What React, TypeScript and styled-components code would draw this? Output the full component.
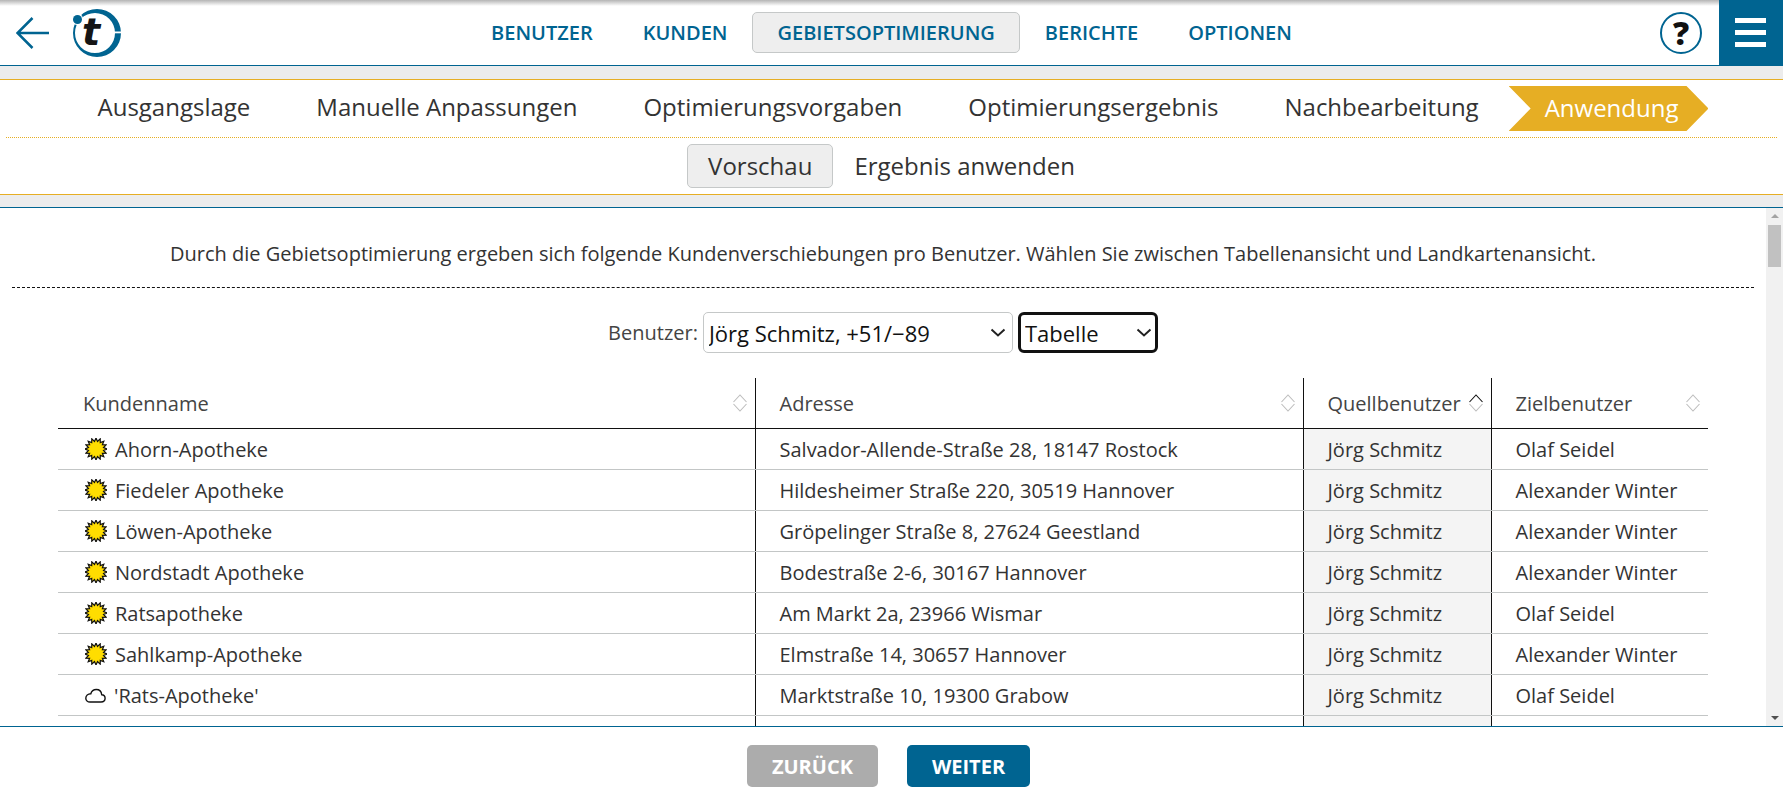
import React from 'react';
import styled, {createGlobalStyle} from 'styled-components';

const BLUE = '#006491';
const GOLD = '#e6ae24';

// chevron of the two selects, same shape as the browser's one in the reference
const CHEVRON = `url("data:image/svg+xml,%3Csvg xmlns='http://www.w3.org/2000/svg' width='16' height='9' viewBox='0 0 16 9'%3E%3Cpath d='M1.500 1.500L8 7.500L14.500 1.500' fill='none' stroke='%23222' stroke-width='2'/%3E%3C/svg%3E")`;

const GlobalStyle = createGlobalStyle`
  html, body {
    margin: 0;
    height: 100%;
    background: #fff;
    font-family: "Open Sans", "Liberation Sans", sans-serif;
    color: #333;
  }
  #root {
    height: 100%;
  }
  * {
    box-sizing: border-box;
  }
`

const STEPS = ['Ausgangslage', 'Manuelle Anpassungen', 'Optimierungsvorgaben', 'Optimierungsergebnis', 'Nachbearbeitung'];
const NAV = ['Benutzer', 'Kunden', 'Gebietsoptimierung', 'Berichte', 'Optionen'];

const ROWS = [
    {icon: 'sun', name: 'Ahorn-Apotheke', address: 'Salvador-Allende-Straße 28, 18147 Rostock', target: 'Olaf Seidel'},
    {icon: 'sun', name: 'Fiedeler Apotheke', address: 'Hildesheimer Straße 220, 30519 Hannover', target: 'Alexander Winter'},
    {icon: 'sun', name: 'Löwen-Apotheke', address: 'Gröpelinger Straße 8, 27624 Geestland', target: 'Alexander Winter'},
    {icon: 'sun', name: 'Nordstadt Apotheke', address: 'Bodestraße 2-6, 30167 Hannover', target: 'Alexander Winter'},
    {icon: 'sun', name: 'Ratsapotheke', address: 'Am Markt 2a, 23966 Wismar', target: 'Olaf Seidel'},
    {icon: 'sun', name: 'Sahlkamp-Apotheke', address: 'Elmstraße 14, 30657 Hannover', target: 'Alexander Winter'},
    {icon: 'cloud', name: "'Rats-Apotheke'", address: 'Marktstraße 10, 19300 Grabow', target: 'Olaf Seidel'},
];

const sunPoints = () => {
    const pts: string[] = [];
    for (let i = 0; i < 32; i++) {
        const r = i % 2 === 0 ? 11 : 7.7;
        const a = (Math.PI * 2 * i) / 32;
        pts.push(`${(11 + r * Math.sin(a)).toFixed(2)},${(11 - r * Math.cos(a)).toFixed(2)}`);
    }
    return pts.join(' ');
};

const SunIcon = () => (
    <StyledIcon width="22" height="22" viewBox="0 0 22 22">
        <polygon points={sunPoints()} fill="#ffdd00" stroke="#111" strokeWidth="1.2" strokeLinejoin="miter"/>
    </StyledIcon>
);

const CloudIcon = () => (
    <StyledIcon width="21" height="22" viewBox="0 0 21 22">
        <path d="M5 18h11c2.500 0 4.100-1.700 4.100-3.700 0-2-1.500-3.500-3.400-3.600C16.400 7.500 14.300 5.500 11.300 5.500c-2.700 0-4.800 1.700-5.500 4.200C3 9.800 .8 11.700.8 14.200.8 16.400 2.700 18 5 18z" fill="none" stroke="#111" strokeWidth="1.400"/>
    </StyledIcon>
);

const SortIcon = ({active}: {active?: boolean}) => (
    <svg width="14" height="18" viewBox="0 0 14 18">
        <path d="M.5 8L7 1L13.500 8" fill="none" stroke={active ? '#111' : '#bdbdbd'} strokeWidth="1.100"/>
        <path d="M.5 10L7 17L13.500 10" fill="none" stroke="#bdbdbd" strokeWidth="1.100"/>
    </svg>
);

const Logo = () => (
    <svg width="50" height="50" viewBox="0 0 50 50">
        <path fillRule="evenodd" fill={BLUE} d="M25 1a24 24 0 1 0 0 48a24 24 0 1 0 0-48zM23 5a20 20 0 1 1 0 40a20 20 0 1 1 0-40z"/>
        <rect x="41" y="23.500" width="9" height="1.800" fill="#fff"/>
        <circle cx="5" cy="11" r="6" fill="#fff"/>
        <circle cx="5.500" cy="11.500" r="4.500" fill={BLUE}/>
        <StyledLogoLetter x="10" y="37">t</StyledLogoLetter>
    </svg>
);

export default function App() {
    return (
        <StyledPage>
            <GlobalStyle/>
            <StyledHeader>
                <StyledHeaderLeft>
                    <svg width="34" height="32" viewBox="0 0 34 32">
                        <path d="M33 16H2M16.500 1L1.500 16l15 15" fill="none" stroke={BLUE} strokeWidth="2.500"/>
                    </svg>
                    <Logo/>
                </StyledHeaderLeft>
                <StyledNav>
                    {NAV.map(item => (
                        <StyledNavItem key={item} $active={item === 'Gebietsoptimierung'}>{item}</StyledNavItem>
                    ))}
                </StyledNav>
                <StyledHeaderRight>
                    <StyledHelp>?</StyledHelp>
                    <StyledMenuButton>
                        <span/><span/><span/>
                    </StyledMenuButton>
                </StyledHeaderRight>
            </StyledHeader>
            <StyledBand/>
            <StyledWizard>
                <StyledSteps>
                    {STEPS.map(step => <StyledStep key={step}>{step}</StyledStep>)}
                    <StyledStepActive>Anwendung</StyledStepActive>
                </StyledSteps>
                <StyledSubSteps>
                    <StyledSubStep $active>Vorschau</StyledSubStep>
                    <StyledSubStep>Ergebnis anwenden</StyledSubStep>
                </StyledSubSteps>
            </StyledWizard>
            <StyledBandBlue/>
            <StyledPane>
                <StyledContent>
                    <StyledIntro>
                        Durch die Gebietsoptimierung ergeben sich folgende Kundenverschiebungen pro Benutzer. Wählen Sie zwischen Tabellenansicht und Landkartenansicht.
                    </StyledIntro>
                    <StyledFilters>
                        <StyledLabel>Benutzer:</StyledLabel>
                        <StyledUserSelect defaultValue="joerg">
                            <option value="joerg">Jörg Schmitz, +51/−89</option>
                        </StyledUserSelect>
                        <StyledViewSelect defaultValue="table">
                            <option value="table">Tabelle</option>
                            <option value="map">Landkarte</option>
                        </StyledViewSelect>
                    </StyledFilters>
                    <StyledTable>
                        <colgroup>
                            <col width="697"/>
                            <col width="548"/>
                            <col width="188"/>
                            <col width="217"/>
                        </colgroup>
                        <thead>
                            <tr>
                                <StyledHeadCell><StyledHeadInner>Kundenname<SortIcon/></StyledHeadInner></StyledHeadCell>
                                <StyledHeadCell><StyledHeadInner>Adresse<SortIcon/></StyledHeadInner></StyledHeadCell>
                                <StyledHeadCell><StyledHeadInner>Quellbenutzer<SortIcon active/></StyledHeadInner></StyledHeadCell>
                                <StyledHeadCell><StyledHeadInner>Zielbenutzer<SortIcon/></StyledHeadInner></StyledHeadCell>
                            </tr>
                        </thead>
                        <tbody>
                            {ROWS.map(row => (
                                <tr key={row.name}>
                                    <StyledCell>
                                        <StyledName>
                                            {row.icon === 'sun' ? <SunIcon/> : <CloudIcon/>}
                                            {row.name}
                                        </StyledName>
                                    </StyledCell>
                                    <StyledCell>{row.address}</StyledCell>
                                    <StyledCell $shaded>Jörg Schmitz</StyledCell>
                                    <StyledCell>{row.target}</StyledCell>
                                </tr>
                            ))}
                            <tr>
                                <StyledCell/>
                                <StyledCell/>
                                <StyledCell $shaded/>
                                <StyledCell/>
                            </tr>
                        </tbody>
                    </StyledTable>
                </StyledContent>
                <StyledScrollbar>
                    <StyledArrowUp/>
                    <StyledThumb/>
                    <StyledArrowDown/>
                </StyledScrollbar>
            </StyledPane>
            <StyledFooter>
                <StyledFooterButton $disabled>Zurück</StyledFooterButton>
                <StyledFooterButton>Weiter</StyledFooterButton>
            </StyledFooter>
        </StyledPage>
    );
}

const StyledPage = styled.div`
  display: flex;
  flex-direction: column;
  height: 100%;
  overflow: hidden;
`

const StyledHeader = styled.header`
  position: relative;
  display: grid;
  grid-template-columns: 1fr auto 1fr;
  align-items: center;
  height: 66px;
  flex: none;
  border-bottom: 1px solid ${BLUE};

  &::before {
    content: "";
    position: absolute;
    top: 0;
    left: 0;
    right: 0;
    height: 6px;
    background: linear-gradient(#b4b4b4, #fff);
  }
`

const StyledHeaderLeft = styled.div`
  display: flex;
  align-items: center;
  gap: 22px;
  padding-left: 16px;
`

const StyledHeaderRight = styled.div`
  display: flex;
  align-items: center;
  justify-content: flex-end;
  gap: 17px;
  height: 100%;
`

const StyledNav = styled.nav`
  display: flex;
  align-items: center;
`

const StyledNavItem = styled.a<{$active?: boolean}>`
  display: block;
  height: 41px;
  line-height: 39px;
  padding: 0 24px;
  font-size: 20px;
  font-weight: 600;
  text-transform: uppercase;
  color: ${BLUE};
  background: ${({$active}) => $active ? '#eee' : 'transparent'};
  border: 1px solid ${({$active}) => $active ? '#c5c8c8' : 'transparent'};
  border-radius: 5px;
`

const StyledHelp = styled.div`
  display: flex;
  align-items: center;
  justify-content: center;
  width: 42px;
  height: 42px;
  border: 2px solid ${BLUE};
  border-radius: 50%;
  font-size: 32px;
  font-weight: 800;
  color: #111;
  background: #fff;
`

const StyledMenuButton = styled.div`
  position: relative;
  display: flex;
  flex-direction: column;
  justify-content: center;
  gap: 7px;
  width: 64px;
  height: 100%;
  padding: 0 17px 0 16px;
  background: ${BLUE};

  span {
    display: block;
    height: 5px;
    background: #fff;
  }
`

const StyledLogoLetter = styled.text`
  font-family: "DejaVu Sans", sans-serif;
  font-weight: 700;
  font-style: italic;
  font-size: 38px;
  fill: #151515;
`

const StyledBand = styled.div`
  flex: none;
  height: 13px;
  background: #ececec;
`

const StyledBandBlue = styled.div`
  flex: none;
  height: 13px;
  background: #ececec;
  border-bottom: 1px solid ${BLUE};
`

const StyledWizard = styled.div`
  flex: none;
  height: 116px;
  border-top: 1px solid ${GOLD};
  border-bottom: 1px solid ${GOLD};
`

const StyledSteps = styled.div`
  display: flex;
  align-items: center;
  justify-content: center;
  height: 58px;
  margin: 0 6px;
  border-bottom: 1px dotted ${GOLD};
`

const StyledStep = styled.div`
  padding: 0 33px 4px;
  font-size: 24px;
  color: #333;
`

const StyledStepActive = styled.div`
  display: flex;
  align-items: center;
  height: 45px;
  margin: 0 10px 0 -3px;
  padding: 0 30px 3px 36px;
  font-size: 24px;
  color: #fff;
  background: ${GOLD};
  clip-path: polygon(0 0, calc(100% - 22px) 0, 100% 50%, calc(100% - 22px) 100%, 0 100%, 22px 50%);
`

const StyledSubSteps = styled.div`
  display: flex;
  align-items: center;
  justify-content: center;
  height: 56px;
`

const StyledSubStep = styled.div<{$active?: boolean}>`
  height: 44px;
  line-height: 41px;
  padding: 0 20px;
  font-size: 24px;
  color: #333;
  background: ${({$active}) => $active ? '#eee' : 'transparent'};
  border: 1px solid ${({$active}) => $active ? '#c5c8c8' : 'transparent'};
  border-radius: 5px;
`

const StyledPane = styled.div`
  display: flex;
  flex: 1;
  min-height: 0;
`

const StyledContent = styled.main`
  flex: 1;
  min-width: 0;
  overflow: hidden;
`

const StyledIntro = styled.div`
  margin: 0 12px;
  padding: 30px 0 17px;
  font-size: 20px;
  line-height: 32px;
  text-align: center;
  border-bottom: 1px dashed #111;
`

const StyledFilters = styled.div`
  display: flex;
  align-items: center;
  justify-content: center;
  gap: 5px;
  margin: 24px 0 25px;
`

const StyledLabel = styled.label`
  font-size: 20px;
  color: #444;
`

const StyledUserSelect = styled.select`
  appearance: none;
  width: 310px;
  height: 41px;
  padding: 0 0 0 5px;
  font-family: inherit;
  font-size: 22px;
  color: #111;
  background: #fff ${CHEVRON} no-repeat right 6px center;
  border: 1px solid #c5c8c8;
  border-radius: 5px;
`

const StyledViewSelect = styled.select`
  appearance: none;
  width: 140px;
  height: 41px;
  padding: 0 0 0 4px;
  font-family: inherit;
  font-size: 22px;
  color: #111;
  background: #fff ${CHEVRON} no-repeat right 3px center;
  border: 3px solid #111;
  border-radius: 6px;
`

const StyledTable = styled.table`
  width: 1650px;
  margin-left: 58px;
  table-layout: fixed;
  border-collapse: collapse;
  font-size: 20px;
`

const StyledHeadCell = styled.th`
  height: 50px;
  padding: 1px 8px 0 24px;
  font-weight: 400;
  text-align: left;
  color: #444;
  border-bottom: 1px solid #111;

  &:first-child {
    padding-left: 25px;
  }

  & + & {
    border-left: 1px solid #111;
  }
`

const StyledHeadInner = styled.div`
  display: flex;
  align-items: center;
  justify-content: space-between;
`

const StyledCell = styled.td<{$shaded?: boolean}>`
  height: 41px;
  padding: 1px 9px 0 24px;
  white-space: nowrap;
  color: #333;
  background: ${({$shaded}) => $shaded ? '#f4f4f4' : 'transparent'};
  border-bottom: 1px solid #c3c6c6;

  & + & {
    border-left: 1px solid #111;
  }
`

const StyledName = styled.div`
  display: flex;
  align-items: center;
  gap: 8px;
`

const StyledIcon = styled.svg`
  flex: none;
  margin-left: 3px;
`

const StyledScrollbar = styled.div`
  display: flex;
  flex-direction: column;
  align-items: center;
  flex: none;
  width: 17px;
  padding-top: 6px;
  background: #f1f1f1;
`

const StyledArrowUp = styled.div`
  width: 0;
  height: 0;
  border-left: 4px solid transparent;
  border-right: 4px solid transparent;
  border-bottom: 4px solid #a3a3a3;
`

const StyledArrowDown = styled.div`
  width: 0;
  height: 0;
  margin-top: auto;
  margin-bottom: 6px;
  border-left: 4px solid transparent;
  border-right: 4px solid transparent;
  border-top: 4px solid #505050;
`

const StyledThumb = styled.div`
  width: 13px;
  height: 42px;
  margin-top: 7px;
  background: #c1c1c1;
`

const StyledFooter = styled.footer`
  display: flex;
  align-items: flex-start;
  justify-content: center;
  gap: 29px;
  flex: none;
  height: 76px;
  padding: 18px 6px 0 0;
  border-top: 1px solid ${BLUE};
`

const StyledFooterButton = styled.button<{$disabled?: boolean}>`
  height: 42px;
  padding: 0 25px;
  font-family: inherit;
  font-size: 20px;
  font-weight: 700;
  text-transform: uppercase;
  color: #fff;
  background: ${({$disabled}) => $disabled ? '#acacac' : BLUE};
  border: 0;
  border-radius: 5px;
`
